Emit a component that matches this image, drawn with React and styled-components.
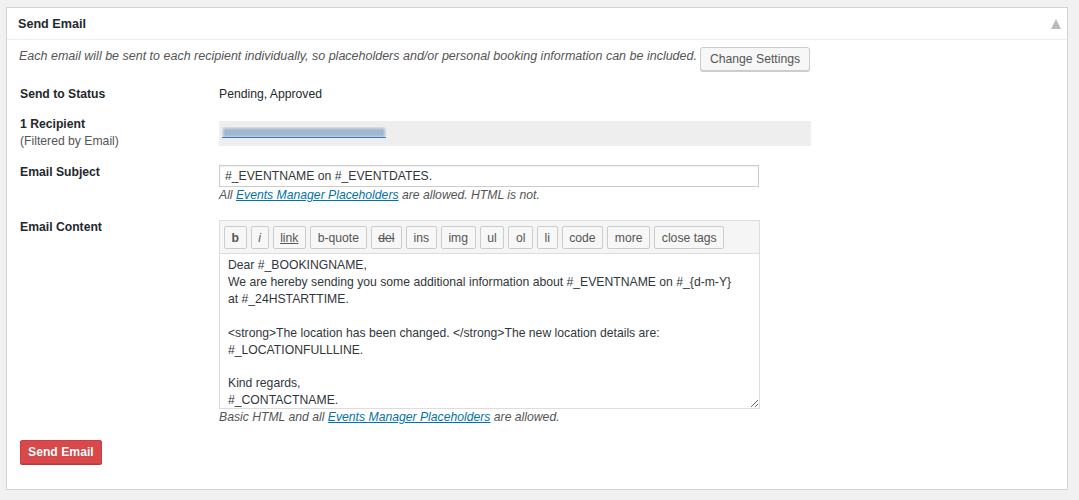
import React from "react";
import styled, { createGlobalStyle } from "styled-components";

const GlobalStyle = createGlobalStyle`
  html, body {
    margin: 0;
    padding: 0;
    background: #f1f1f1;
  }
  body {
    font-family: "Liberation Sans", Arial, sans-serif;
    font-size: 12.2px;
    color: #23282d;
  }
`;

const TAGS = [
  "b",
  "i",
  "link",
  "b-quote",
  "del",
  "ins",
  "img",
  "ul",
  "ol",
  "li",
  "code",
  "more",
  "close tags",
];

const CONTENT = `Dear #_BOOKINGNAME,
We are hereby sending you some additional information about #_EVENTNAME on #_{d-m-Y}
at #_24HSTARTTIME.

<strong>The location has been changed. </strong>The new location details are:
#_LOCATIONFULLLINE.

Kind regards,
#_CONTACTNAME.`;

const App = () => {
  return (
    <Page>
      <GlobalStyle />
      <Panel>
        <PanelHeader>
          <Title>Send Email</Title>
          <Toggle />
        </PanelHeader>
        <PanelBody>
          <Intro>
            <IntroText>
              Each email will be sent to each recipient individually, so
              placeholders and/or personal booking information can be included.
            </IntroText>
            <GrayButton>Change Settings</GrayButton>
          </Intro>

          <Row $top={15}>
            <Label>Send to Status</Label>
            <Value>Pending, Approved</Value>
          </Row>

          <Row $top={13}>
            <Label>
              1 Recipient
              <SubLabel>(Filtered by Email)</SubLabel>
            </Label>
            <RecipientBox>
              <BlurredLink>
                <Blur />
              </BlurredLink>
            </RecipientBox>
          </Row>

          <Row $top={14}>
            <Label>Email Subject</Label>
            <Field>
              <SubjectInput
                type="text"
                defaultValue="#_EVENTNAME on #_EVENTDATES."
              />
              <Hint>
                All <a href="#">Events Manager Placeholders</a> are allowed.
                HTML is not.
              </Hint>
            </Field>
          </Row>

          <Row $top={15}>
            <Label>Email Content</Label>
            <Field>
              <Editor>
                <Toolbar>
                  {TAGS.map((tag) => (
                    <TagButton key={tag} $tag={tag}>
                      {tag}
                    </TagButton>
                  ))}
                </Toolbar>
                <ContentArea wrap="off" defaultValue={CONTENT} />
              </Editor>
              <Hint>
                Basic HTML and all <a href="#">Events Manager Placeholders</a>{" "}
                are allowed.
              </Hint>
            </Field>
          </Row>

          <SendButton>Send Email</SendButton>
        </PanelBody>
      </Panel>
    </Page>
  );
};

export default App;

const Page = styled.div`
  padding: 7px 11px 10px 6px;
  box-sizing: border-box;
  height: 500px;
`;

const Panel = styled.div`
  height: 483px;
  box-sizing: border-box;
  background: #fff;
  border: 1px solid #d4d4d4;
  display: flex;
  flex-direction: column;
`;

const PanelHeader = styled.div`
  display: flex;
  align-items: center;
  justify-content: space-between;
  height: 31px;
  padding: 0 6px 0 11px;
  border-bottom: 1px solid #eee;
`;

const Title = styled.h2`
  margin: 0;
  font-size: 12.6px;
  font-weight: 600;
  color: #23282d;
`;

// collapse arrow
const Toggle = styled.span`
  width: 0;
  height: 0;
  border-left: 5.5px solid transparent;
  border-right: 5.5px solid transparent;
  border-bottom: 10px solid #bcbcbc;
  margin-top: 1px;
`;

const PanelBody = styled.div`
  padding: 7px 12px 0 13px;
  display: flex;
  flex-direction: column;
  align-items: flex-start;
`;

const Intro = styled.div`
  display: flex;
  align-items: flex-start;
  gap: 3px;
  margin-left: -1px;
`;

const IntroText = styled.em`
  margin-top: 1px;
  line-height: 17px;
  font-size: 12.5px;
  color: #555;
`;

const GrayButton = styled.button`
  height: 24px;
  padding: 0 9px;
  font-family: inherit;
  font-size: 12.2px;
  color: #555;
  background: #f7f7f7;
  border: 1px solid #ccc;
  border-radius: 3px;
  box-shadow: 0 1px 0 #ccc;
  cursor: pointer;
`;

const Row = styled.div`
  display: flex;
  align-items: flex-start;
  margin-top: ${(p) => p.$top}px;
`;

const Label = styled.div`
  width: 199px;
  flex-shrink: 0;
  font-weight: bold;
  line-height: 17px;
`;

const SubLabel = styled.div`
  font-weight: normal;
  color: #555;
`;

const Value = styled.div`
  line-height: 17px;
`;

const RecipientBox = styled.div`
  width: 592px;
  height: 25px;
  margin-top: 5px;
  box-sizing: border-box;
  background: #eee;
  padding: 6px 0 0 3px;
`;

const BlurredLink = styled.div`
  width: 164px;
  height: 10px;
  border-bottom: 1.5px solid #3a78b5;
  overflow: hidden;
`;

const Blur = styled.div`
  margin: 1px 1px 0;
  height: 9px;
  background: #9fb5d0;
  filter: blur(1.5px);
`;

const Field = styled.div`
  display: flex;
  flex-direction: column;
`;

const SubjectInput = styled.input`
  width: 540px;
  height: 22px;
  margin: 1px 0 0;
  box-sizing: border-box;
  padding: 0 5px;
  font-family: inherit;
  font-size: 12.2px;
  color: #32373c;
  border: 1px solid #ccc;
  box-shadow: inset 0 1px 2px rgba(0, 0, 0, 0.07);
  outline: none;
`;

const Hint = styled.em`
  line-height: 17px;
  color: #555;

  & a {
    color: #0073aa;
  }
`;

const Editor = styled.div`
  width: 541px;
  margin-top: 1px;
  box-sizing: border-box;
  border: 1px solid #ddd;
`;

const Toolbar = styled.div`
  display: flex;
  gap: 4px;
  padding: 5px 4px 4px;
  background: #f5f5f5;
  border-bottom: 1px solid #ddd;
`;

const TagButton = styled.button`
  height: 23px;
  padding: 0 6.6px;
  font-family: inherit;
  font-size: 12.2px;
  color: #555;
  background: #f7f7f7;
  border: 1px solid #ccc;
  border-radius: 2px;
  font-weight: ${(p) => (p.$tag === "b" ? "bold" : "normal")};
  font-style: ${(p) => (p.$tag === "i" ? "italic" : "normal")};
  text-decoration: ${(p) =>
    p.$tag === "link"
      ? "underline"
      : p.$tag === "del"
      ? "line-through"
      : "none"};
  cursor: pointer;
`;

const ContentArea = styled.textarea`
  display: block;
  width: 100%;
  height: 154px;
  box-sizing: border-box;
  margin: 0;
  padding: 3px 8px 0;
  border: none;
  font-family: inherit;
  font-size: 12.2px;
  line-height: 16.9px;
  color: #32373c;
  white-space: pre;
  overflow: hidden;
  resize: vertical;
  outline: none;
`;

const SendButton = styled.button`
  margin-top: 14px;
  height: 24px;
  padding: 0 7px;
  font-family: inherit;
  font-size: 12.2px;
  font-weight: bold;
  color: #fff;
  background: #d9484a;
  border: 1px solid #c94042;
  border-radius: 2px;
  box-shadow: 0 1px 0 #b83a3c;
  text-shadow: 0 0 1px rgba(0, 0, 0, 0.25);
  cursor: pointer;
`;
